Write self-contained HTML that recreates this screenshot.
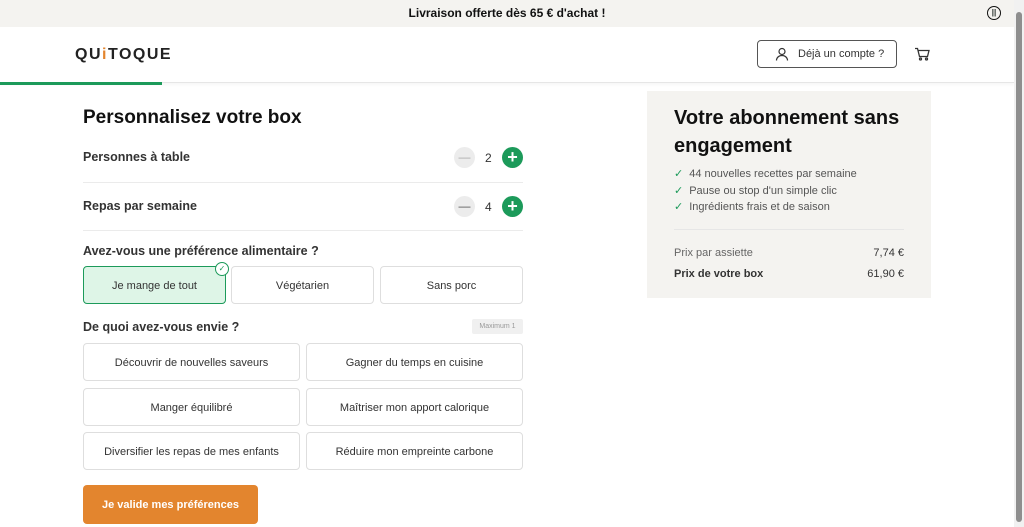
<!DOCTYPE html>
<html><head><meta charset="utf-8"><style>
*{box-sizing:border-box;margin:0;padding:0}
body{width:1024px;height:527px;overflow:hidden;background:#fff;font-family:"Liberation Sans",sans-serif;color:#1f2a24;position:relative}
.abs{position:absolute}
.banner{left:0;top:0;width:1014px;height:27px;background:#f4f3f0;text-align:center;font-size:12px;font-weight:bold;line-height:27px;color:#111}
.hdr{left:0;top:27px;width:1014px;height:56px;background:#fff;border-bottom:1px solid #e6e6e6;box-shadow:0 2px 3px rgba(0,0,0,.04)}
.prog{left:0;top:82px;width:162px;height:3px;background:#1c9a5a}
.scroll{left:1014px;top:0;width:10px;height:527px;background:#f1f1f1}
.scroll div{position:absolute;left:2px;top:12px;width:6px;height:510px;background:#8e8e8e;border-radius:3px}
.h1{left:83px;top:107px;font-size:19px;font-weight:bold;color:#111}
.lbl{font-size:12.5px;font-weight:bold;color:#333}
.sep{left:83px;width:440px;height:1px;background:#ebebeb}
.min{width:21px;height:21px;border-radius:50%;background:#ececec;color:#aaa;text-align:center;line-height:20px;font-size:12px}
.plus{width:21px;height:21px;border-radius:50%;background:#1c9a5a;color:#fff;text-align:center;line-height:20px;font-size:18px;font-weight:bold}
.num{font-size:12px;color:#333}
.opt{height:38px;border:1px solid #dedede;border-radius:4px;text-align:center;line-height:38px;font-size:11px;color:#333;background:#fff}
.sel{background:#def5e7;border-color:#1c9a5a}
.btn{left:83px;top:485px;width:175px;height:39px;background:#e3852e;border-radius:4px;color:#fff;font-size:11px;font-weight:bold;text-align:center;line-height:40px}
.panel{left:647px;top:91px;width:284px;height:207px;background:#f4f3f0}
</style></head><body>
<div class="abs banner">Livraison offerte dès 65 € d'achat !</div>
<div class="abs" style="left:987px;top:6px;width:14px;height:14px;border:1.5px solid #111;border-radius:50%;font-size:8px;text-align:center;line-height:11px;font-weight:bold">||</div>
<div class="abs hdr"></div>
<div class="abs" style="left:75px;top:46px;font-size:16px;font-weight:bold;letter-spacing:1.5px;color:#222">QU<span style="color:#e3852e">i</span>TOQUE</div>
<div class="abs" style="left:757px;top:40px;width:140px;height:28px;border:1px solid #555;border-radius:4px;font-size:11px;color:#333;line-height:26px;padding-left:40px">Déjà un compte ?</div>
<svg class="abs" style="left:775px;top:47px" width="14" height="14" viewBox="0 0 14 14" fill="none" stroke="#333" stroke-width="1.2"><circle cx="7" cy="4.5" r="3"/><path d="M1.5 13.5c0-3 2.5-5 5.5-5s5.5 2 5.5 5"/></svg>
<svg class="abs" style="left:914px;top:47px" width="16" height="14" viewBox="0 0 16 14" fill="none" stroke="#333" stroke-width="1.3"><path d="M1 1.5h2.5l2 8h8l1.5-6H4.5"/><circle cx="6.5" cy="12" r="1"/><circle cx="12.5" cy="12" r="1"/></svg>
<div class="abs prog"></div>
<div class="abs scroll"><div></div></div>

<div class="abs h1">Personnalisez votre box</div>
<div class="abs lbl" style="left:83px;top:150px">Personnes à table</div>
<div class="abs min" style="left:454px;top:147px">—</div><div class="abs num" style="left:485px;top:151px">2</div><div class="abs plus" style="left:502px;top:147px">+</div>
<div class="abs sep" style="top:182px"></div>
<div class="abs lbl" style="left:83px;top:199px">Repas par semaine</div>
<div class="abs min" style="left:454px;top:196px;color:#555">—</div><div class="abs num" style="left:485px;top:200px">4</div><div class="abs plus" style="left:502px;top:196px">+</div>
<div class="abs sep" style="top:230px"></div>
<div class="abs lbl" style="left:83px;top:244px">Avez-vous une préférence alimentaire ?</div>
<div class="abs opt sel" style="left:83px;top:266px;width:143px">Je mange de tout</div>
<div class="abs" style="left:215px;top:262px;width:14px;height:14px;border-radius:50%;background:#fff;border:1px solid #1c9a5a;color:#1c9a5a;font-size:8px;text-align:center;line-height:12px">✓</div>
<div class="abs opt" style="left:231px;top:266px;width:143px">Végétarien</div>
<div class="abs opt" style="left:380px;top:266px;width:143px">Sans porc</div>
<div class="abs lbl" style="left:83px;top:320px">De quoi avez-vous envie ?</div>
<div class="abs" style="left:472px;top:319px;width:51px;height:15px;background:#f0f0f0;border-radius:2px;font-size:7px;color:#999;text-align:center;line-height:15px">Maximum 1</div>
<div class="abs opt" style="left:83px;top:343px;width:217px">Découvrir de nouvelles saveurs</div>
<div class="abs opt" style="left:306px;top:343px;width:217px">Gagner du temps en cuisine</div>
<div class="abs opt" style="left:83px;top:388px;width:217px">Manger équilibré</div>
<div class="abs opt" style="left:306px;top:388px;width:217px">Maîtriser mon apport calorique</div>
<div class="abs opt" style="left:83px;top:432px;width:217px">Diversifier les repas de mes enfants</div>
<div class="abs opt" style="left:306px;top:432px;width:217px">Réduire mon empreinte carbone</div>
<div class="abs btn">Je valide mes préférences</div>

<div class="abs panel"></div>
<div class="abs" style="left:674px;top:104px;width:250px;font-size:20px;font-weight:bold;line-height:28px;color:#111">Votre abonnement sans engagement</div>
<div class="abs" style="left:674px;top:166px;font-size:11px;color:#555;line-height:16.5px">
<div><span style="color:#1c9a5a;margin-right:6px">✓</span>44 nouvelles recettes par semaine</div>
<div><span style="color:#1c9a5a;margin-right:6px">✓</span>Pause ou stop d'un simple clic</div>
<div><span style="color:#1c9a5a;margin-right:6px">✓</span>Ingrédients frais et de saison</div></div>
<div class="abs" style="left:674px;top:229px;width:230px;height:1px;background:#e6e6e6"></div>
<div class="abs" style="left:674px;top:247px;font-size:11px;color:#666">Prix par assiette</div>
<div class="abs" style="left:840px;top:247px;width:64px;text-align:right;font-size:11px;color:#333">7,74 €</div>
<div class="abs" style="left:674px;top:268px;font-size:11px;font-weight:bold;color:#333">Prix de votre box</div>
<div class="abs" style="left:840px;top:268px;width:64px;text-align:right;font-size:11px;color:#333">61,90 €</div>
</body></html>
